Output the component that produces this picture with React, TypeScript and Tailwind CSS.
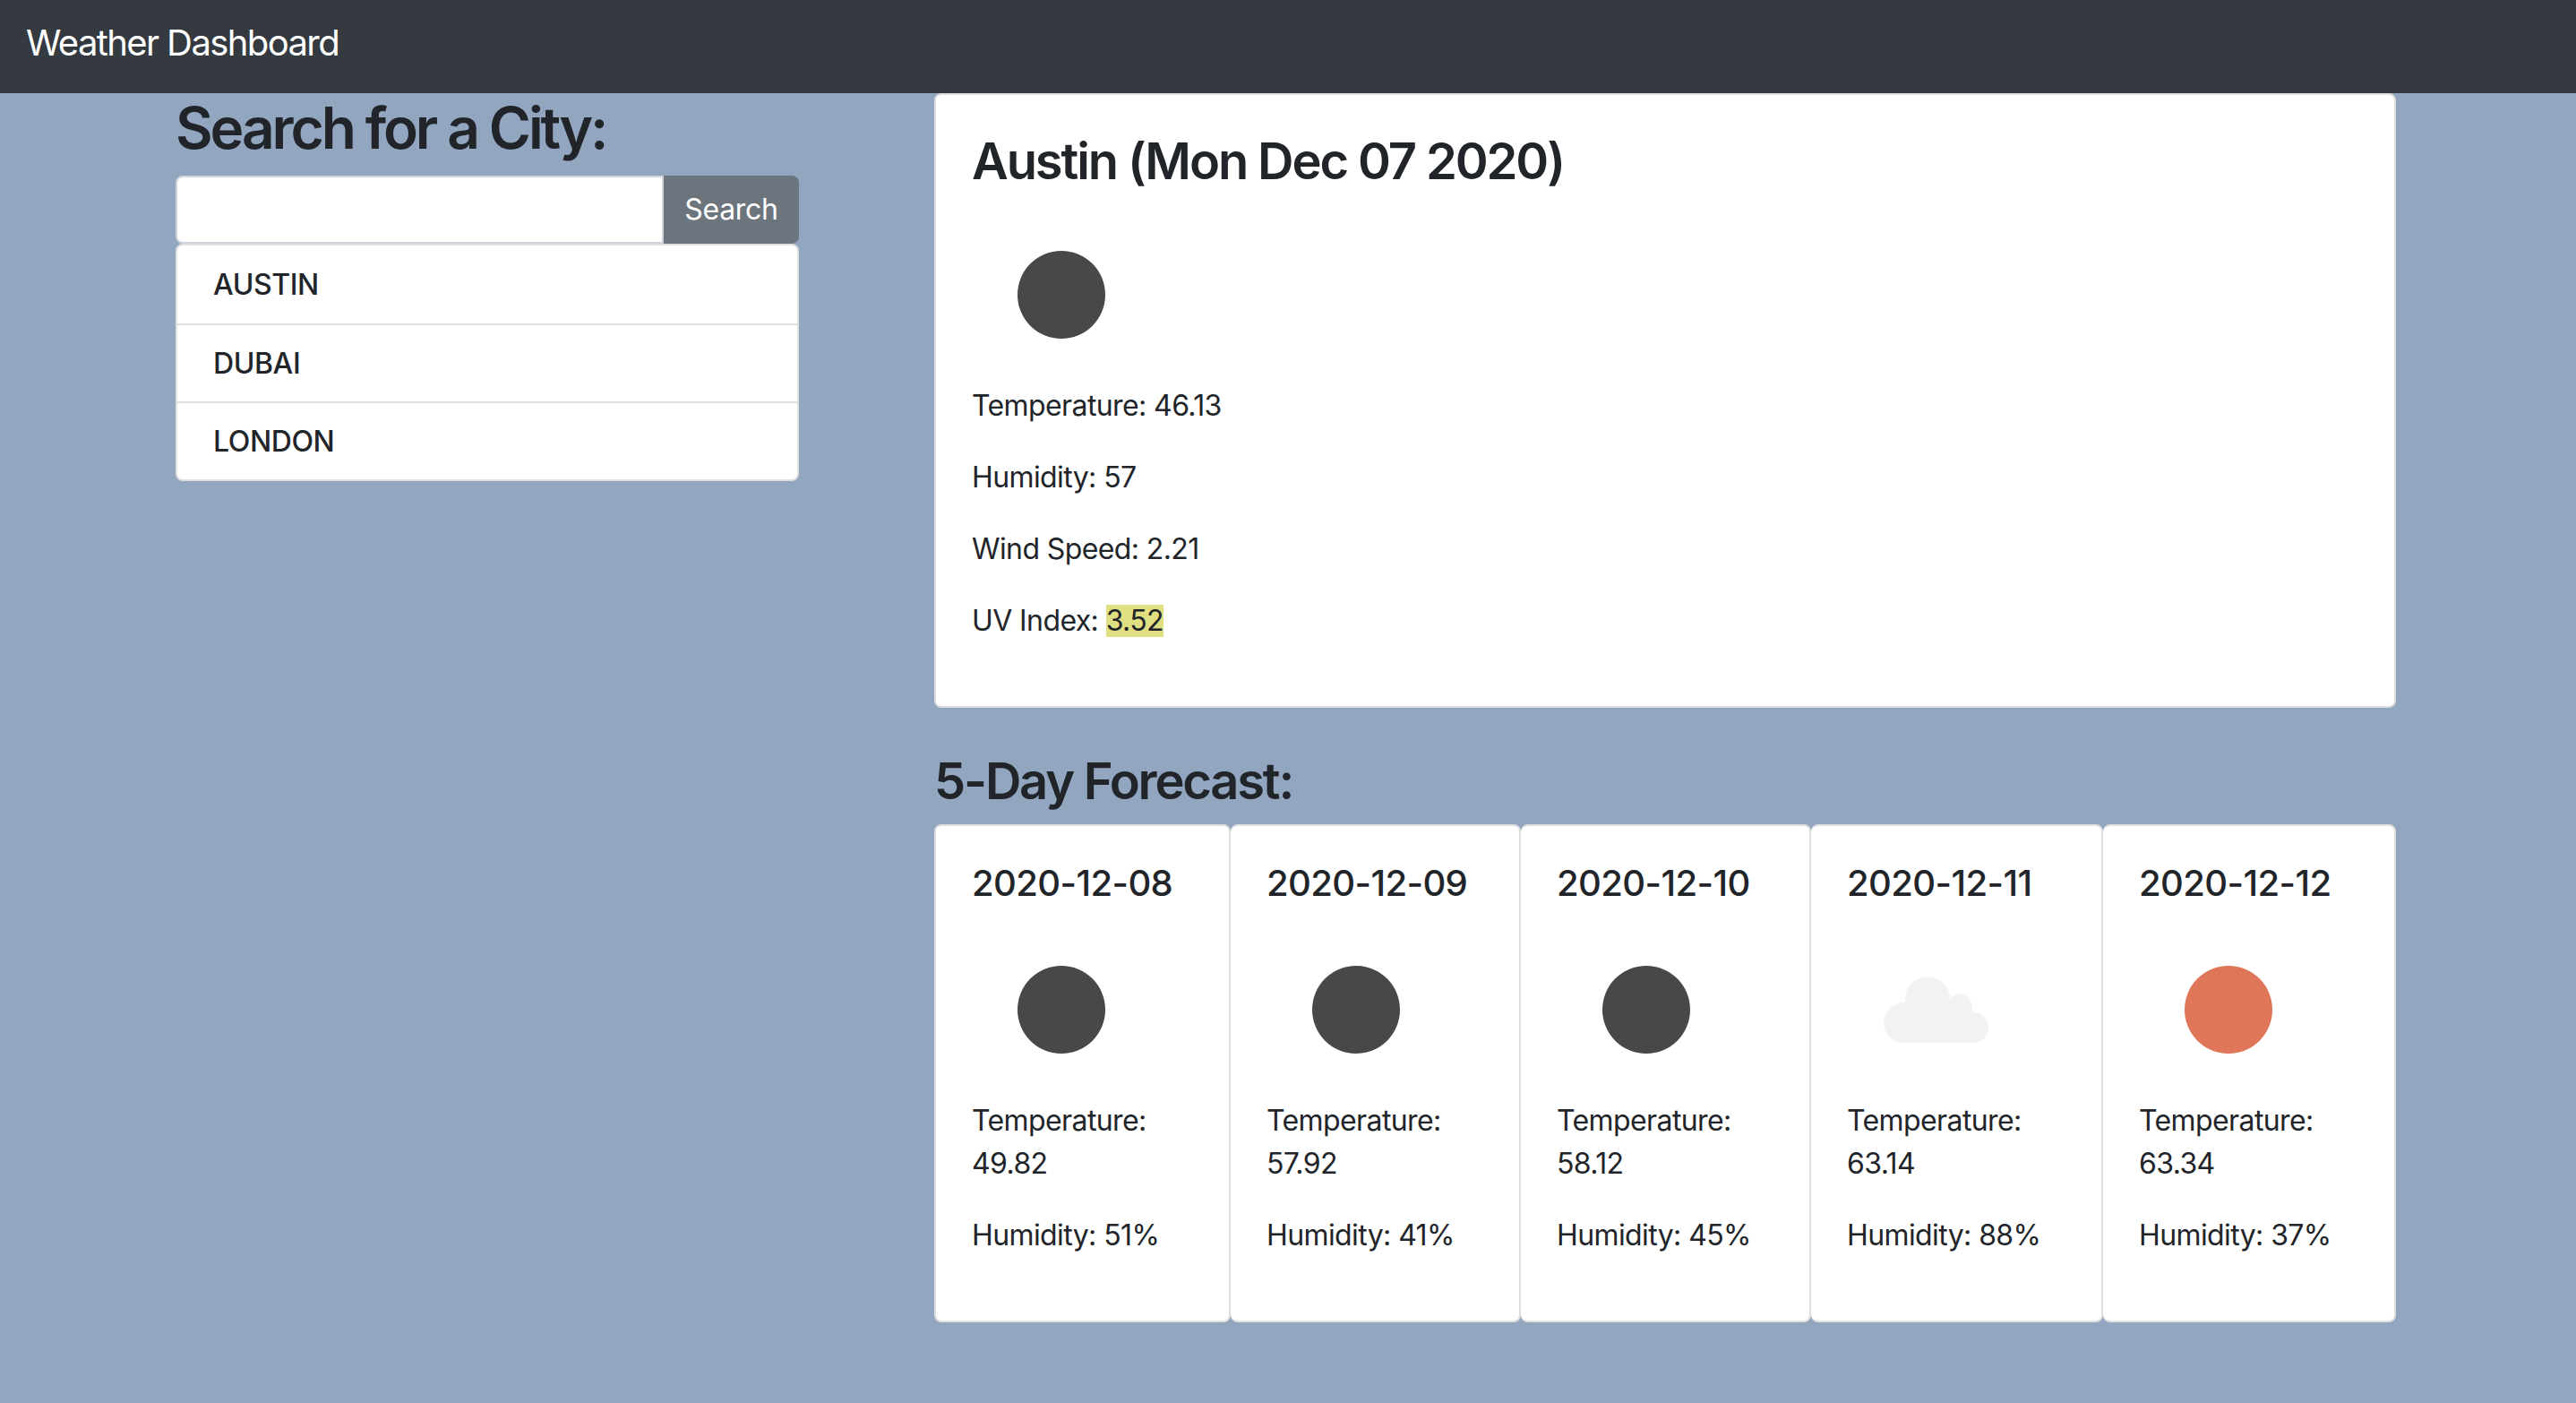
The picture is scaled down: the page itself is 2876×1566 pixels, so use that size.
import React from 'react'

type Sky = 'dark' | 'cloud' | 'sun'

const forecast: { date: string; temp: string; humidity: string; sky: Sky; width: string }[] = [
  { date: '2020-12-08', temp: '49.82', humidity: '51%', sky: 'dark', width: 'w-[331px]' },
  { date: '2020-12-09', temp: '57.92', humidity: '41%', sky: 'dark', width: 'w-[324px]' },
  { date: '2020-12-10', temp: '58.12', humidity: '45%', sky: 'dark', width: 'w-[324px]' },
  { date: '2020-12-11', temp: '63.14', humidity: '88%', sky: 'cloud', width: 'w-[326px]' },
  { date: '2020-12-12', temp: '63.34', humidity: '37%', sky: 'sun', width: 'w-[327px]' },
]

function WeatherIcon({ sky }: { sky: Sky }) {
  return (
    <svg className="block h-[200px] w-[200px]" viewBox="0 0 200 200">
      {sky === 'dark' && <circle cx="100" cy="100" r="49" fill="#48484a" />}
      {sky === 'sun' && <circle cx="100" cy="100" r="49" fill="#df7657" />}
      {sky === 'cloud' && (
        <g fill="#f2f2f1">
          <circle cx="90" cy="88" r="25" />
          <circle cx="126" cy="96" r="13.5" />
          <circle cx="63.5" cy="114.5" r="22.5" />
          <circle cx="141" cy="120" r="17" />
          <rect x="63" y="100" width="78" height="37" />
        </g>
      )}
    </svg>
  )
}

export default function App() {
  return (
    <div className="min-h-screen bg-[#92a6c0] font-['Inter',sans-serif] text-[#212529]">
      <nav className="flex h-[104px] items-start bg-[#343a40] pl-[29px] pt-[24px]">
        <span className="text-[40px] leading-[48px] tracking-[-1.6px] text-white">Weather Dashboard</span>
      </nav>
      <div className="flex pl-[196px]">
        <div className="w-[696px]">
          <h2 className="mb-[15px] text-[64px] leading-[77px] font-[570] tracking-[-3.1px]">Search for a City:</h2>
          <div className="flex h-[76px]">
            <input className="min-w-0 flex-1 rounded-l-lg border-2 border-[#ced4da] bg-white" />
            <button className="w-[151px] rounded-r-lg bg-[#6c757d] text-[32px] tracking-[-0.3px] text-white">Search</button>
          </div>
          <ul className="rounded-lg border-2 border-[#dfdfdf] bg-white text-[32px] font-[450] tracking-[-0.4px]">
            {['AUSTIN', 'DUBAI', 'LONDON'].map((city, i) => (
              <li key={city} className={`flex h-[87px] items-center pl-[40px] ${i > 0 ? 'border-t-2 border-[#dfdfdf]' : ''}`}>
                {city}
              </li>
            ))}
          </ul>
        </div>
        <div className="ml-[151px] w-[1632px]">
          <section className="rounded-lg border-2 border-[#dfdfdf] bg-white p-[40px]">
            <h3 className="mb-[15px] pt-px text-[56px] leading-[67px] font-[570] tracking-[-2.1px]">Austin (Mon Dec 07 2020)</h3>
            <WeatherIcon sky="dark" />
            <p className="mb-[32px] text-[32px] leading-[48px] tracking-[-0.6px]">Temperature: 46.13</p>
            <p className="mb-[32px] text-[32px] leading-[48px] tracking-[-0.6px]">Humidity: 57</p>
            <p className="mb-[32px] text-[32px] leading-[48px] tracking-[-0.6px]">Wind Speed: 2.21</p>
            <p className="mb-[31px] text-[32px] leading-[48px] tracking-[-0.6px]">
              UV Index: <span className="inline-block bg-[#e0e082] leading-[36px]">3.52</span>
            </p>
          </section>
          <h3 className="mt-[49px] mb-[14px] text-[56px] leading-[67px] font-[570] tracking-[-2.2px]">5-Day Forecast:</h3>
          <div className="flex">
            {forecast.map((day, i) => (
              <div key={day.date} className={`${day.width} ${i === 0 ? 'border-l-2' : ''} rounded-lg border-y-2 border-r-2 border-[#dfdfdf] bg-white px-[40px] pt-[40px] pb-[39px]`}>
                <h5 className="mb-[17px] text-[40px] leading-[48px] font-medium tracking-[-0.6px]">{day.date}</h5>
                <WeatherIcon sky={day.sky} />
                <p className="mb-[32px] text-[32px] leading-[48px] tracking-[-0.6px]">Temperature: {day.temp}</p>
                <p className="mb-[32px] text-[32px] leading-[48px] tracking-[-0.6px]">Humidity: {day.humidity}</p>
              </div>
            ))}
          </div>
        </div>
      </div>
    </div>
  )
}
